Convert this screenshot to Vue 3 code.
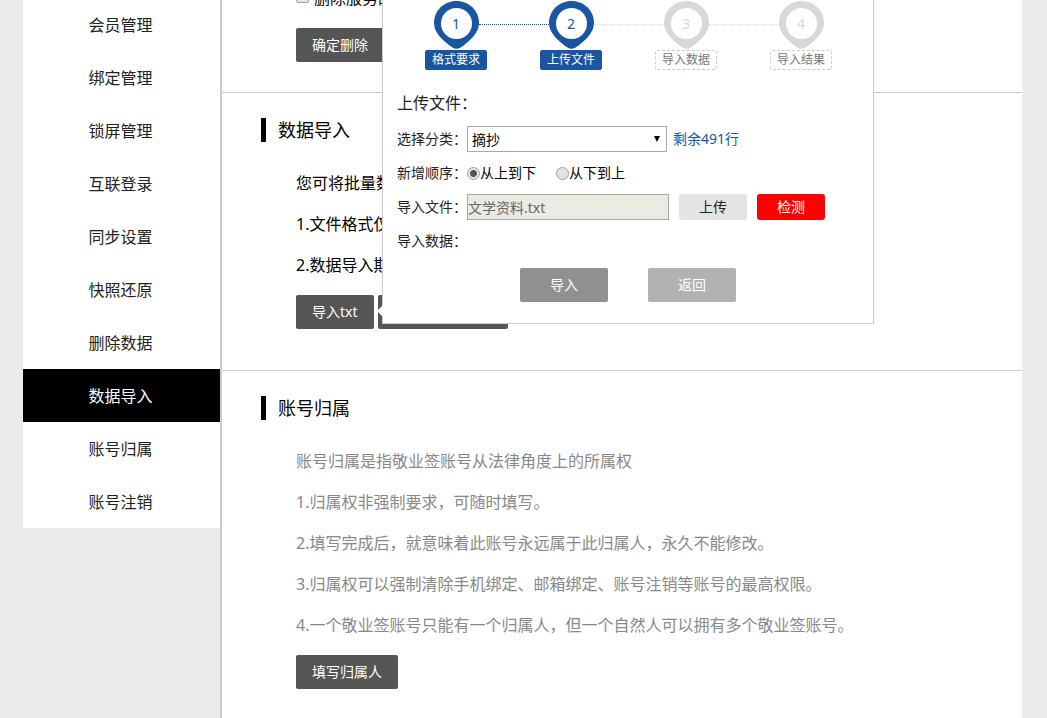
<script setup>
import { ref } from 'vue'

const menu = ['会员管理', '绑定管理', '锁屏管理', '互联登录', '同步设置', '快照还原', '删除数据', '数据导入', '账号归属', '账号注销']
const active = ref('数据导入')

const steps = [
  { label: '格式要求', done: true },
  { label: '上传文件', done: true },
  { label: '导入数据', done: false },
  { label: '导入结果', done: false }
]

const importNotes = ['您可将批量数据', '1.文件格式仅限', '2.数据导入期间']
const ownerNotes = [
  '账号归属是指敬业签账号从法律角度上的所属权',
  '1.归属权非强制要求，可随时填写。',
  '2.填写完成后，就意味着此账号永远属于此归属人，永久不能修改。',
  '3.归属权可以强制清除手机绑定、邮箱绑定、账号注销等账号的最高权限。',
  '4.一个敬业签账号只能有一个归属人，但一个自然人可以拥有多个敬业签账号。'
]

const category = ref('摘抄')
const order = ref('down')
const fileName = ref('文学资料.txt')
const removeServer = ref(false)
</script>

<template>
  <div class="page">
    <nav class="sidebar">
      <a
        v-for="item in menu"
        :key="item"
        href="#"
        class="menu-item"
        :class="{ active: item === active }"
        @click.prevent="active = item"
      >{{ item }}</a>
    </nav>

    <main class="main">
      <section class="section first">
        <div class="content">
          <label class="check"><input v-model="removeServer" type="checkbox" />删除服务的</label>
          <div class="actions"><button type="button" class="btn">确定删除</button></div>
        </div>
      </section>

      <section class="section">
        <h2 class="title">数据导入</h2>
        <div class="content">
          <p v-for="note in importNotes" :key="note" class="note">{{ note }}</p>
          <div class="actions">
            <button type="button" class="btn">导入txt</button>
            <button type="button" class="btn wide" aria-label="导入"></button>

            <div class="popup" role="dialog" aria-label="上传文件">
              <ol class="steps">
                <li v-for="(step, i) in steps" :key="step.label" class="step" :class="{ done: step.done }">
                  <span class="pin">
                    <svg viewBox="0 0 45 48" width="45" height="48" aria-hidden="true">
                      <path d="M22.5 0C34.9 0 45 9.6 45 22C45 32 35.5 40.5 26.5 46.5Q22.5 49 18.5 46.5C9.5 40.5 0 32 0 22C0 9.6 10.1 0 22.5 0Z" fill="currentColor" />
                      <circle cx="22.5" cy="22.5" r="15.5" fill="#fff" />
                    </svg>
                    <span class="num">{{ i + 1 }}</span>
                  </span>
                  <span class="tag">{{ step.label }}</span>
                </li>
              </ol>

              <h3 class="popup-title">上传文件：</h3>
              <div class="row">
                <label class="name" for="category">选择分类：</label>
                <span class="select-box">
                  <select id="category" v-model="category"><option>摘抄</option></select>
                  <svg class="caret" viewBox="0 0 6 6" width="6" height="6" aria-hidden="true"><path d="M0 0H6L3 6Z" fill="#000" /></svg>
                </span>
                <span class="remain">剩余491行</span>
              </div>
              <div class="row" role="radiogroup" aria-labelledby="order-name">
                <span id="order-name" class="name">新增顺序：</span>
                <label class="radio"><input v-model="order" type="radio" name="order" value="down" /><span>从上到下</span></label>
                <label class="radio"><input v-model="order" type="radio" name="order" value="up" /><span>从下到上</span></label>
              </div>
              <div class="row">
                <label class="name" for="file">导入文件：</label>
                <input id="file" v-model="fileName" class="file" type="text" disabled />
                <button type="button" class="small">上传</button>
                <button type="button" class="small red">检测</button>
              </div>
              <div class="row"><span class="name">导入数据：</span></div>
              <div class="footer">
                <button type="button" class="big">导入</button>
                <button type="button" class="big light">返回</button>
              </div>
            </div>
          </div>
        </div>
      </section>

      <section class="section">
        <h2 class="title">账号归属</h2>
        <div class="content muted">
          <p v-for="note in ownerNotes" :key="note" class="note">{{ note }}</p>
          <div class="actions"><button type="button" class="btn">填写归属人</button></div>
        </div>
      </section>
    </main>
  </div>
</template>

<style>
html,
body {
  background: #ebebeb;
  overflow: hidden;
}
</style>

<style scoped>
.page {
  display: flex;
  align-items: flex-start;
  min-height: 100vh;
  padding: 0 25px 0 23px;
  box-sizing: border-box;
  font-family: "Noto Sans", "Noto Sans CJK SC", sans-serif;
  font-size: 16px;
  color: #000;
}
button,
input,
select {
  font: inherit;
  box-sizing: border-box;
  margin: 0;
}
button {
  border: 0;
  padding: 0 0 2px;
  cursor: pointer;
}
.sidebar {
  flex: 0 0 197px;
  margin-top: -2px;
  background: #fff;
}
.menu-item {
  display: block;
  padding: 2px 2px 0 0;
  line-height: 51px;
  text-align: center;
  color: #222;
  text-decoration: none;
}
.menu-item.active {
  background: #000;
  color: #fff;
}
.main {
  flex: 1;
  min-width: 0;
  min-height: calc(100vh + 22px);
  margin-top: -22px;
  background: #fff;
  border-left: 2px solid #ccc;
  box-sizing: border-box;
}
.section {
  padding: 25px 0 41px 39px;
  border-bottom: 1px solid #ccc;
}
.section:last-child {
  border-bottom: 0;
  padding-bottom: 29px;
}
.section.first {
  padding-top: 0;
  padding-bottom: 30px;
}
.title {
  margin: 0 0 21px;
  padding-left: 12px;
  border-left: 5px solid #000;
  font-size: 18px;
  font-weight: 400;
  line-height: 24px;
}
.content {
  padding-left: 35px;
}
.muted {
  color: #888;
}
.note {
  margin: 0;
  line-height: 41px;
}
.check {
  display: flex;
  align-items: center;
  gap: 5px;
  line-height: 41px;
}
.check input {
  appearance: none;
  width: 13px;
  height: 13px;
  margin-bottom: 4px;
  border: 1px solid #a0a0a0;
  border-radius: 2px;
  background: #e4e4e4;
}
.check input:checked {
  background: #555;
}
.actions {
  position: relative;
  display: flex;
  gap: 4px;
  margin-top: 9px;
}
.btn {
  height: 34px;
  padding: 0 16px 2px;
  border-radius: 2px;
  background: #555;
  color: #fff;
  font-size: 14px;
}
.btn.wide {
  width: 130px;
}
.popup {
  position: absolute;
  left: 86px;
  bottom: 5px;
  width: 492px;
  padding: 10px 14px 21px;
  box-sizing: border-box;
  background: #fff;
  border: 1px solid #ccc;
  font-size: 14px;
  color: #222;
}
.popup::before {
  content: "";
  position: absolute;
  left: -6px;
  bottom: 6px;
  border: 6px solid transparent;
  border-left: 0;
  border-right-color: #fff;
}
.steps {
  display: flex;
  gap: 53px;
  margin: 0 0 16px;
  padding: 0 0 0 28px;
  list-style: none;
}
.step {
  position: relative;
  flex: 0 0 62px;
  display: flex;
  flex-direction: column;
  align-items: center;
  color: #d8d8d8;
}
.step.done {
  color: #1955a1;
}
.step + .step::before {
  content: "";
  position: absolute;
  right: 53px;
  top: 23px;
  width: 70px;
  border-top: 1px dotted currentColor;
}
.pin {
  position: relative;
  height: 49px;
}
.pin svg {
  display: block;
}
.num {
  position: absolute;
  inset: 0 0 auto;
  line-height: 45px;
  text-align: center;
  font-size: 14px;
}
.tag {
  width: 62px;
  height: 20px;
  box-sizing: border-box;
  border: 1px dashed #ccc;
  border-radius: 2px;
  font-size: 12px;
  line-height: 18px;
  text-align: center;
  color: #777;
}
.done .tag {
  border: 1px solid #1955a1;
  background: #1955a1;
  color: #fff;
}
.popup-title {
  margin: 0 0 2px;
  font-size: 16px;
  font-weight: 400;
  line-height: 34px;
}
.row {
  display: flex;
  align-items: center;
  height: 34px;
}
.name,
.remain,
.radio span {
  padding-bottom: 2px;
}
.name {
  flex: 0 0 70px;
}
.select-box {
  position: relative;
  width: 200px;
}
.select-box select {
  display: block;
  width: 100%;
  height: 26px;
  padding: 0 4px;
  appearance: none;
  border: 1px solid #a9a9a9;
  border-radius: 0;
  background: #fff;
  color: #000;
}
.caret {
  position: absolute;
  right: 7px;
  top: 10px;
}
.remain {
  margin-left: 6px;
  color: #1955a1;
}
.radio {
  display: flex;
  align-items: center;
  margin-right: 20px;
  color: #000;
}
.radio input {
  appearance: none;
  width: 13px;
  height: 13px;
  border: 1px solid #a0a0a0;
  border-radius: 50%;
  background: #e2e2e2;
}
.radio input:checked {
  background: radial-gradient(circle, #555 0 3px, #e8e8e8 4px);
}
.file {
  width: 202px;
  height: 26px;
  padding: 0;
  border: 1px solid #a9a9a9;
  background: #ebebe4;
  color: #666;
}
.small {
  width: 68px;
  height: 26px;
  margin-left: 10px;
  border-radius: 3px;
  background: #e4e4e4;
  color: #222;
}
.small.red {
  background: #f00;
  color: #fff;
}
.footer {
  display: flex;
  justify-content: center;
  gap: 40px;
  margin-top: 10px;
}
.big {
  width: 88px;
  height: 34px;
  border-radius: 2px;
  background: #909090;
  color: #fff;
}
.big.light {
  background: #b2b2b2;
}
</style>
